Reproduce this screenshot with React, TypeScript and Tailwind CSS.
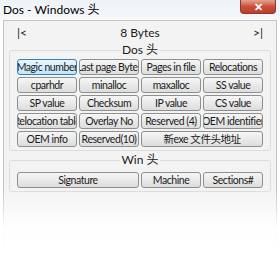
import type { ReactNode } from "react";

const dosRows: string[][] = [
  ["Magic number", "Last page Bytes", "Pages in file", "Relocations"],
  ["cparhdr", "minalloc", "maxalloc", "SS value"],
  ["SP value", "Checksum", "IP value", "CS value"],
  ["Relocation table", "Overlay No", "Reserved (4)", "OEM identifier"],
];

function Btn({ label, focus, className = "" }: { label: string; focus?: boolean; className?: string }) {
  return (
    <div
      className={`h-[16px] flex items-center justify-center overflow-hidden whitespace-nowrap rounded-[3px] border text-[10.5px] leading-none tracking-[-0.45px] text-[#1b1b1b] ${
        focus
          ? "border-[#3c7fb1] bg-gradient-to-b from-[#eaf6fd] to-[#bee6fd]"
          : "border-[#8e8f8f] bg-gradient-to-b from-[#f6f6f6] to-[#dddddd]"
      } ${className}`}
    >
      {label}
    </div>
  );
}

function Group({ title, children, top }: { title: string; children: ReactNode; top: string }) {
  return (
    <div className={`relative mx-[5px] rounded-[3px] border border-[#dcdcdc] px-[7px] pb-[3px] ${top}`}>
      <div className="absolute left-0 right-0 -top-[9px] flex justify-center">
        <span className="bg-[#f3f3f3] px-[1px] text-[12px] leading-[16px] text-[#1b1b1b]">{title}</span>
      </div>
      {children}
    </div>
  );
}

export default function App() {
  return (
    <div
      className="relative w-[280px] h-[270px] overflow-hidden bg-white"
      style={{ fontFamily: 'Lato, "Noto Sans CJK SC", sans-serif' }}
    >
      <div className="h-[20px] flex items-start justify-between bg-gradient-to-b from-[#eef3f8] to-[#f6f8fa]">
        <span className="pl-[3px] pt-[1px] text-[12px] leading-[18px] text-black">Dos - Windows 头</span>
        <div className="mr-[4px] h-[14px] w-[36px] rounded-b-[4px] border border-t-0 border-[#8a3a30] bg-gradient-to-b from-[#e4a190] via-[#c9503d] to-[#c23a28] flex items-center justify-center text-white text-[11px] font-bold leading-none">
          ✕
        </div>
      </div>
      <div className="mx-[3px] border border-[#c4c4c4] bg-[#f3f3f3] pb-[2px]">
        <div className="h-[23px] flex items-center justify-between px-[13px] text-[12px] text-[#1b1b1b]">
          <span>|&lt;</span>
          <span>8 Bytes</span>
          <span>&gt;|</span>
        </div>
        <Group title="Dos 头" top="mt-[6px] pt-[8px]">
          <div className="flex flex-col gap-[2px]">
            {dosRows.map((row, r) => (
              <div key={r} className="grid grid-cols-4 gap-[2px]">
                {row.map((b) => (
                  <Btn key={b} label={b} focus={b === "Magic number"} />
                ))}
              </div>
            ))}
            <div className="grid grid-cols-4 gap-[2px]">
              <Btn label="OEM info" />
              <Btn label="Reserved(10)" />
              <Btn label="新exe 文件头地址" className="col-span-2" />
            </div>
          </div>
        </Group>
        <Group title="Win 头" top="mt-[9px] pt-[11px]">
          <div className="grid grid-cols-4 gap-[2px]">
            <Btn label="Signature" className="col-span-2" />
            <Btn label="Machine" />
            <Btn label="Sections#" />
          </div>
        </Group>
        <div className="h-[60px]" />
      </div>
      <div className="absolute left-0 right-0 top-[188px] h-[82px] bg-gradient-to-b from-white/0 via-white/95 to-white" />
    </div>
  );
}
